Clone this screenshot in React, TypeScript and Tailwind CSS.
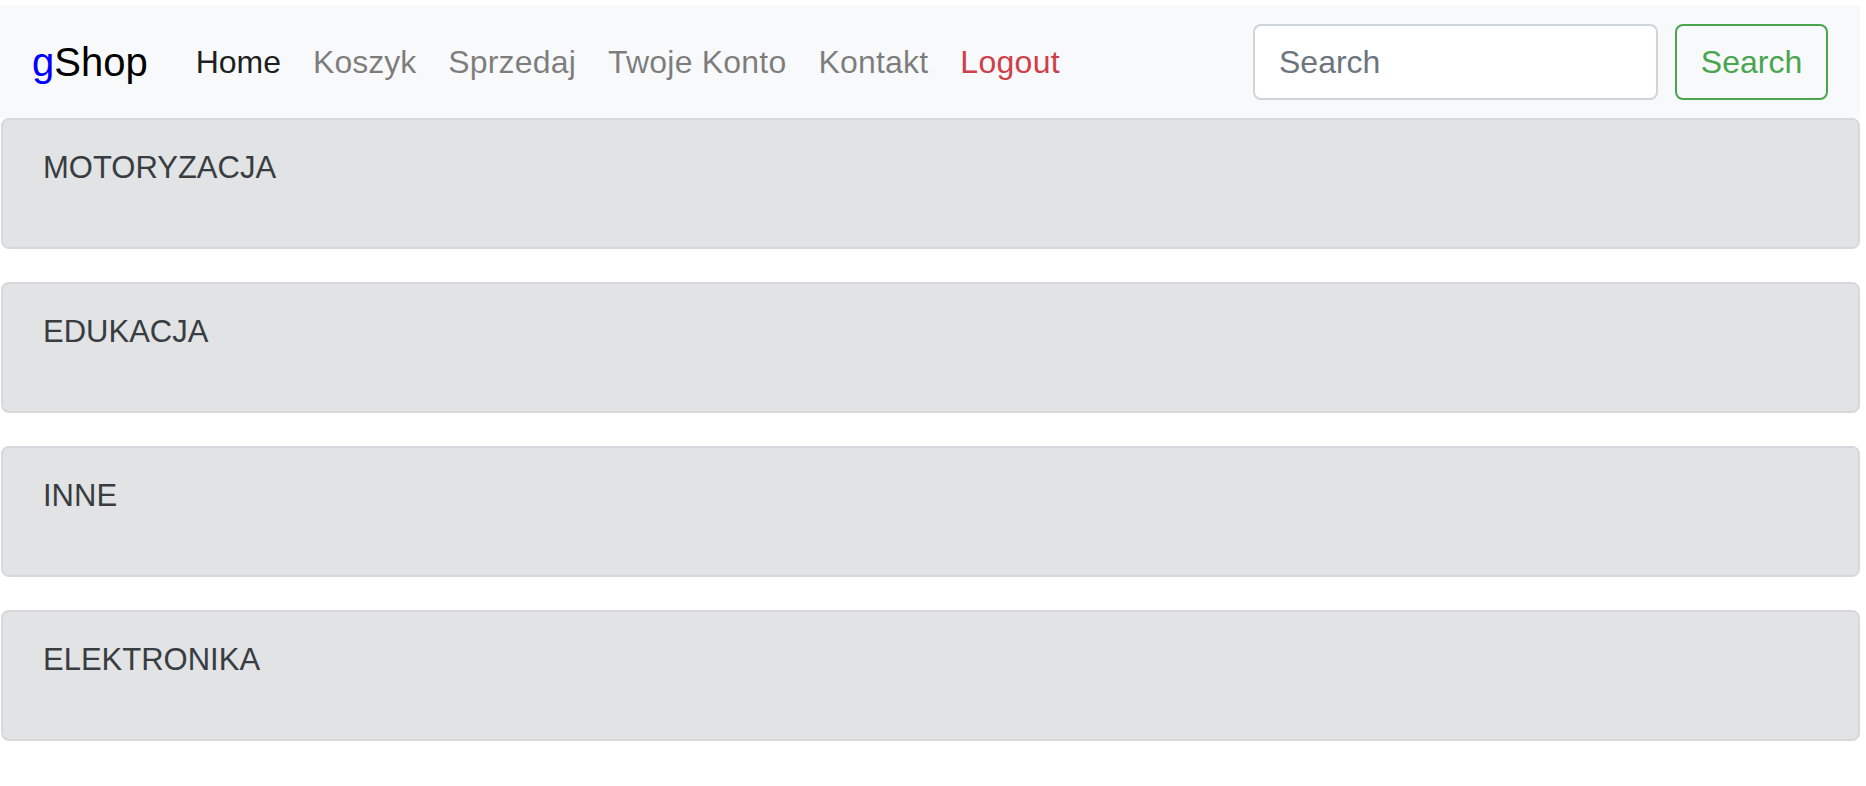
import React from "react";

const categories = ["MOTORYZACJA", "EDUKACJA", "INNE", "ELEKTRONIKA"];

export default function App() {
  return (
    <div className="w-[1860px] pt-[6px] bg-white" style={{ fontFamily: '"Liberation Sans", Arial, Helvetica, sans-serif' }}>
      <nav className="flex items-center h-[112px] px-[32px] bg-[#f8f9fa]">
        <a className="text-[40px] leading-[60px] mr-[32px] text-black">
          <span className="text-[#0000ff]">g</span>Shop
        </a>
        <ul className="flex items-center text-[32px] leading-[48px]">
          <li className="px-[16px] py-[16px] text-black/90">Home</li>
          <li className="px-[16px] py-[16px] text-black/50">Koszyk</li>
          <li className="px-[16px] py-[16px] text-black/50 tracking-[0.2px]">Sprzedaj</li>
          <li className="px-[16px] py-[16px] text-black/50 tracking-[0.2px]">Twoje Konto</li>
          <li className="px-[16px] py-[16px] text-black/50 tracking-[0.2px]">Kontakt</li>
          <li className="px-[16px] py-[16px] text-[#d03e48] tracking-[0.3px]">Logout</li>
        </ul>
        <form className="ml-auto flex items-center" onSubmit={(e) => e.preventDefault()}>
          <input
            type="search"
            placeholder="Search"
            className="w-[405px] h-[76px] px-[24px] text-[32px] leading-[48px] border-2 border-[#ced4da] rounded-[8px] bg-white text-[#495057] placeholder:text-[#6c757d] outline-none"
          />
          <button
            type="submit"
            className="ml-[17px] h-[76px] w-[153px] text-[32px] leading-[48px] text-[#4aa54f] border-2 border-[#4aa54f] rounded-[8px] bg-transparent"
          >
            Search
          </button>
        </form>
      </nav>
      <div className="flex flex-col gap-[33px]">
        {categories.map((c) => (
          <div
            key={c}
            className="h-[131px] ml-[1px] w-[1859px] px-[40px] pt-[24px] bg-[#e2e3e5] border-2 border-[#d6d8db] rounded-[8px] text-[#383d41] text-[31px] leading-[48px]"
          >
            {c}
          </div>
        ))}
      </div>
    </div>
  );
}
